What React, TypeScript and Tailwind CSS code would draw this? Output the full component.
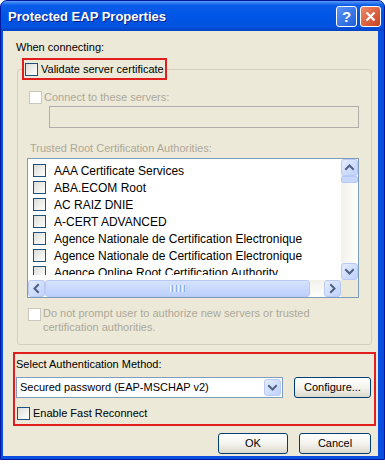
import React from "react";

type Dir = "up" | "down" | "left" | "right";

const chevron: Record<Dir, string> = {
  up: "M4 9 L7.5 5.5 L11 9",
  down: "M4 6 L7.5 9.5 L11 6",
  left: "M9 4 L5.5 7.5 L9 11",
  right: "M6 4 L9.5 7.5 L6 11",
};

function ScrollBtn({ dir }: { dir: Dir }) {
  return (
    <div className="w-[17px] h-[17px] shrink-0 rounded-[3px] border border-[#B7CAF5] bg-linear-to-br from-[#E4ECFE] to-[#BFD1FB] flex items-center justify-center">
      <svg width="15" height="15" viewBox="0 0 15 15">
        <path d={chevron[dir]} fill="none" stroke="#4D6185" strokeWidth="2" strokeLinecap="square" />
      </svg>
    </div>
  );
}

function Check({ disabled }: { disabled?: boolean }) {
  return disabled ? (
    <span className="block w-[13px] h-[13px] shrink-0 border border-[#CAC8BB] bg-white" />
  ) : (
    <span className="block w-[13px] h-[13px] shrink-0 border border-[#1C5180] bg-linear-to-br from-[#DCDCD7] to-white" />
  );
}

function XPButton({ children, w }: { children: React.ReactNode; w: string }) {
  return (
    <div
      className={`${w} h-[21px] shrink-0 rounded-[3px] border border-[#003C74] bg-linear-to-b from-white via-[#F4F3EE] to-[#DCD8CC] flex items-center justify-center text-[11px] text-black`}
    >
      {children}
    </div>
  );
}

const items = [
  "AAA Certificate Services",
  "ABA.ECOM Root",
  "AC RAIZ DNIE",
  "A-CERT ADVANCED",
  "Agence Nationale de Certification Electronique",
  "Agence Nationale de Certification Electronique",
  "Agence Online Root Certification Authority",
];

export default function App() {
  return (
    <div className="w-[385px] h-[467px] bg-white font-['Liberation_Sans',Arial,sans-serif] overflow-hidden">
      <div className="w-[385px] h-[460px] flex flex-col rounded-t-[7px] border border-[#0019A0] bg-[#0A4EE0] overflow-hidden">
        {/* Title bar */}
        <div className="h-[30px] shrink-0 flex items-center pl-[7px] pr-[3px] bg-[linear-gradient(180deg,#5A9CF8_0%,#0A5DE8_14%,#0055E5_50%,#0052DF_86%,#0043C4_100%)]">
          <span className="flex-1 text-white font-bold text-[13px] leading-none [text-shadow:1px_1px_0_#0A1E80]">
            Protected EAP Properties
          </span>
          <div className="flex gap-[3px]">
            <div className="w-[21px] h-[21px] rounded-[3px] border border-white bg-linear-to-br from-[#5A94F6] to-[#1E5ED8] flex items-center justify-center text-white font-bold text-[15px] leading-none">
              ?
            </div>
            <div className="w-[21px] h-[21px] rounded-[3px] border border-white bg-linear-to-br from-[#EE8767] to-[#C9401D] flex items-center justify-center">
              <svg width="13" height="13" viewBox="0 0 13 13">
                <path d="M2.5 2.5 L10.5 10.5 M10.5 2.5 L2.5 10.5" stroke="white" strokeWidth="2.2" />
              </svg>
            </div>
          </div>
        </div>

        {/* Body */}
        <div className="flex-1 ml-[2px] mr-[6px] mb-[3px] bg-[#ECE9D8] text-[11px] text-black flex flex-col">
          <div className="pl-[13px] pt-[10px] leading-[13px]">When connecting:</div>

          <fieldset className="ml-[14px] mt-[4px] w-[355px] border border-[#D0D0BF] rounded-[3px] pb-[10px]">
            <legend className="ml-[4px] h-[22px] border-2 border-[#E21D1D] pl-[1px] pr-[1px] flex items-center gap-[3px]">
              <Check />
              <span className="leading-[13px]">Validate server certificate</span>
            </legend>

            <div className="ml-[11px] mt-[11px] flex items-center gap-[2px] text-[#ACA899] leading-[13px]">
              <Check disabled />
              <span>Connect to these servers:</span>
            </div>
            <div className="ml-[31px] mt-[2px] w-[310px] h-[22px] border border-[#AFAEAA] bg-[#ECE9D8]" />

            <div className="ml-[12px] mt-[14px] leading-[13px] text-[#ACA899]">
              Trusted Root Certification Authorities:
            </div>

            <div className="ml-[9px] mt-[3px] w-[332px] h-[140px] border border-[#7F9DB9] bg-white flex flex-col">
              <div className="h-[121px] flex">
                <div className="flex-1">
                  <div className="h-[116px] overflow-hidden pt-[3px] text-[12px]">
                    {items.map((t, i) => (
                      <div key={i} className="h-[17px] flex items-center pl-[5px] gap-[8px] whitespace-nowrap">
                        <Check />
                        <span className="leading-[14px]">{t}</span>
                      </div>
                    ))}
                  </div>
                </div>
                <div className="w-[17px] flex flex-col bg-linear-to-r from-[#F3F1EA] to-[#FEFEFB]">
                  <ScrollBtn dir="up" />
                  <div className="h-[7px] rounded-[2px] border border-[#B7CAF5] bg-[#C8D8FC]" />
                  <div className="flex-1" />
                  <ScrollBtn dir="down" />
                </div>
              </div>
              <div className="h-[17px] flex">
                <div className="flex-1 flex bg-linear-to-b from-[#F3F1EA] to-[#FEFEFB]">
                  <ScrollBtn dir="left" />
                  <div className="w-[265px] h-[17px] rounded-[3px] border border-[#B7CAF5] bg-linear-to-b from-[#D6E2FD] to-[#BCD0FB] flex items-center justify-center gap-[1px]">
                    <span className="w-[1px] h-[7px] bg-[#EEF4FE]" />
                    <span className="w-[1px] h-[7px] bg-[#8CB0F8]" />
                    <span className="w-[1px] h-[7px] bg-[#EEF4FE]" />
                    <span className="w-[1px] h-[7px] bg-[#8CB0F8]" />
                    <span className="w-[1px] h-[7px] bg-[#EEF4FE]" />
                    <span className="w-[1px] h-[7px] bg-[#8CB0F8]" />
                    <span className="w-[1px] h-[7px] bg-[#EEF4FE]" />
                    <span className="w-[1px] h-[7px] bg-[#8CB0F8]" />
                  </div>
                  <div className="flex-1" />
                  <ScrollBtn dir="right" />
                </div>
                <div className="w-[17px] bg-[#ECE9D8]" />
              </div>
            </div>

            <div className="ml-[10px] mt-[8px] flex items-start gap-[2px] text-[#ACA899]">
              <span className="mt-[2px]">
                <Check disabled />
              </span>
              <span className="leading-[14px]">
                Do not prompt user to authorize new servers or trusted
                <br />
                certification authorities.
              </span>
            </div>
          </fieldset>

          <div className="ml-[10px] mt-[7px] w-[363px] h-[74px] border-2 border-[#E21D1D] flex flex-col pt-[4px]">
            <div className="pl-[1px] leading-[13px]">Select Authentication Method:</div>
            <div className="mt-[6px] flex items-center gap-[11px] pl-[1px]">
              <div className="w-[267px] h-[21px] border border-[#7F9DB9] bg-white flex items-center pl-[3px] pr-[1px]">
                <span className="flex-1 leading-[13px]">Secured password (EAP-MSCHAP v2)</span>
                <ScrollBtn dir="down" />
              </div>
              <XPButton w="w-[77px]">Configure...</XPButton>
            </div>
            <div className="mt-[9px] pl-[2px] flex items-center gap-[3px] leading-[13px]">
              <Check />
              <span>Enable Fast Reconnect</span>
            </div>
          </div>

          <div className="mt-[7px] flex justify-end gap-[11px] pr-[7px]">
            <XPButton w="w-[70px]">OK</XPButton>
            <XPButton w="w-[72px]">Cancel</XPButton>
          </div>
        </div>
      </div>
    </div>
  );
}
